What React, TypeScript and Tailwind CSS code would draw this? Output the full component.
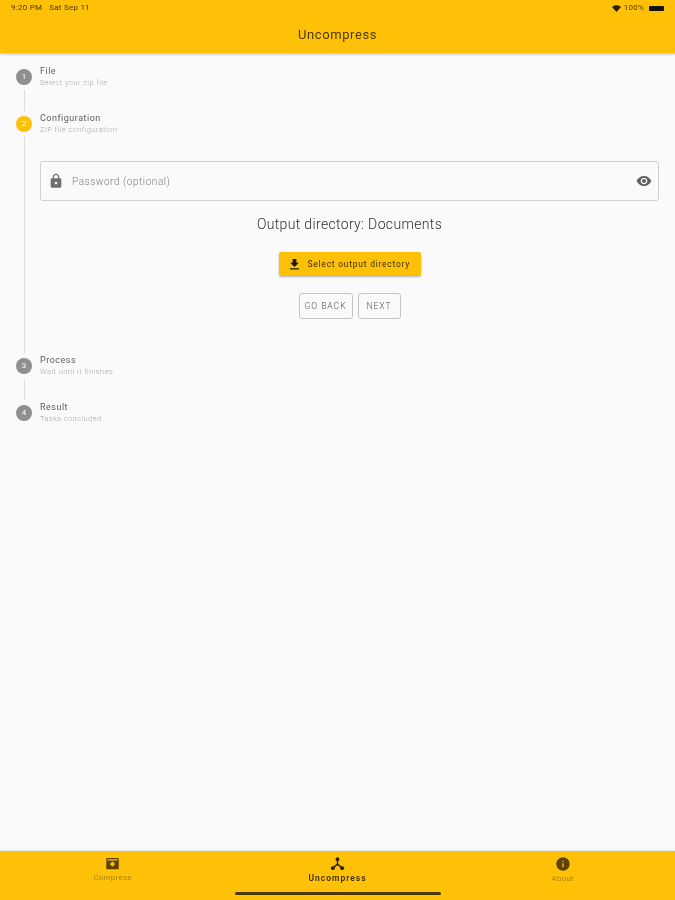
import { useState } from "react";

const steps = [
  { n: 1, title: "File", sub: "Select your zip file" },
  { n: 2, title: "Configuration", sub: "ZIP file configuration" },
  { n: 3, title: "Process", sub: "Wait until it finishes" },
  { n: 4, title: "Result", sub: "Tasks concluded" },
];

const StepHeader = ({ n, title, sub, active }: { n: number; title: string; sub: string; active?: boolean }) => (
  <div className="flex h-4 items-center gap-2">
    <div
      className={[
        "flex h-4 w-4 shrink-0 items-center justify-center rounded-full text-[8px] text-white",
        active ? "bg-[#ffc107]" : "bg-[#8f8f8f]",
      ].join(" ")}
    >
      {n}
    </div>
    <div className="flex flex-col">
      <span className="text-[9px] leading-[11px] tracking-[0.5px] text-[#5c5c5c]">{title}</span>
      <span className="mt-px text-[7.5px] font-light leading-[10px] tracking-[0.42px] text-[#a8a8a8]">{sub}</span>
    </div>
  </div>
);

const Rail = () => (
  <div className="flex w-4 shrink-0 justify-center py-[5px]">
    <div className="w-px bg-[#dcdcdc]" />
  </div>
);

const LockIcon = () => (
  <svg width="16" height="16" viewBox="0 0 24 24" fill="#6f6f6f">
    <path d="M18 8h-1V6c0-2.76-2.24-5-5-5S7 3.24 7 6v2H6c-1.1 0-2 .9-2 2v10c0 1.1.9 2 2 2h12c1.1 0 2-.9 2-2V10c0-1.1-.9-2-2-2zm-6 9c-1.1 0-2-.9-2-2s.9-2 2-2 2 .9 2 2-.9 2-2 2zm3.1-9H8.9V6c0-1.71 1.39-3.1 3.1-3.1 1.71 0 3.1 1.39 3.1 3.1v2z" />
  </svg>
);

const EyeIcon = () => (
  <svg width="16" height="16" viewBox="0 0 24 24" fill="#5f5f5f">
    <path d="M12 4.5C7 4.5 2.73 7.61 1 12c1.730 4.39 6 7.5 11 7.5s9.27-3.11 11-7.5c-1.73-4.39-6-7.5-11-7.5zM12 17c-2.76 0-5-2.24-5-5s2.24-5 5-5 5 2.24 5 5-2.24 5-5 5zm0-8c-1.66 0-3 1.34-3 3s1.34 3 3 3 3-1.34 3-3-1.34-3-3-3z" />
  </svg>
);

const DownloadIcon = () => (
  <svg width="15" height="15" viewBox="0 0 24 24" fill="#1f1a00">
    <path d="M19 9h-4V3H9v6H5l7 7 7-7zM5 18v2h14v-2H5z" />
  </svg>
);

const ArchiveIcon = () => (
  <svg width="15" height="15" viewBox="0 0 24 24" fill="#5c4300">
    <path d="M20 3H4c-1.1 0-2 .9-2 2v14c0 1.1.9 2 2 2h16c1.1 0 2-.9 2-2V5c0-1.1-.9-2-2-2zm-8 14-5-5h3V9h4v3h3l-5 5zM4 7V5h16v2H4z" />
  </svg>
);

const SplitIcon = () => (
  <svg width="15" height="15" viewBox="0 0 24 24" fill="none" stroke="#2b2000" strokeWidth="2.2">
    <path d="M12 7v6l-7 6M12 13l7 6" />
    <circle cx="12" cy="5" r="3" fill="#2b2000" stroke="none" />
    <circle cx="4.5" cy="19.5" r="3" fill="#2b2000" stroke="none" />
    <circle cx="19.5" cy="19.5" r="3" fill="#2b2000" stroke="none" />
  </svg>
);

const InfoIcon = () => (
  <svg width="16" height="16" viewBox="0 0 24 24" fill="#5c4300">
    <path d="M12 2C6.48 2 2 6.48 2 12s4.48 10 10 10 10-4.48 10-10S17.52 2 12 2zm1 15h-2v-6h2v6zm0-8h-2V7h2v2z" />
  </svg>
);

const App = () => {
  const [tab] = useState("Uncompress");
  const tabs = [
    { label: "Compress", icon: <ArchiveIcon /> },
    { label: "Uncompress", icon: <SplitIcon /> },
    { label: "About", icon: <InfoIcon /> },
  ];

  return (
    <div className="flex h-[900px] w-full flex-col overflow-hidden bg-[#fafafa] font-['Roboto',sans-serif] blur-[0.4px]">
      {/* Header */}
      <header className="z-10 flex h-[53px] shrink-0 flex-col bg-[#ffc107] px-[11px] shadow-[0_1px_3px_rgba(0,0,0,0.25)]">
        <div className="flex h-4 items-center justify-between text-[8px] tracking-[0.25px] text-[#4a3800]">
          <div className="flex gap-[7px]">
            <span>9:20 PM</span>
            <span>Sat Sep 11</span>
          </div>
          <div className="flex items-center gap-[3px]">
            <svg width="9" height="7" viewBox="0 0 24 18" fill="#2b2000">
              <path d="M12 18 0 5c7-6.500 17-6.500 24 0z" />
            </svg>
            <span>100%</span>
            <div className="ml-[2px] h-[5px] w-[15px] rounded-[1px] bg-[#111111]" />
          </div>
        </div>
        <div className="flex flex-1 items-center justify-center pb-[5px] pt-[5px] text-[13px] tracking-[0.6px] text-[#4a3800]">
          Uncompress
        </div>
      </header>

      {/* Stepper */}
      <main className="flex-1 px-4 pt-4">
        <StepHeader {...steps[0]} />
        <div className="flex h-[31px] gap-2">
          <Rail />
        </div>
        <StepHeader {...steps[1]} active />
        <div className="flex h-[226px] gap-2">
          <Rail />
          <div className="flex flex-1 flex-col items-center pt-[29px]">
            <div className="flex h-[40px] w-full items-center rounded-[3px] border border-[#cfcfcf] pl-[7px] pr-[6px]">
              <LockIcon />
              <span className="ml-2 flex-1 text-[10px] font-light tracking-[0.56px] text-[#7d7d7d]">Password (optional)</span>
              <EyeIcon />
            </div>
            <p className="mt-[15px] text-[14px] font-light leading-[17px] tracking-[0.34px] text-[#2f2f2f]">
              Output directory: Documents
            </p>
            <button className="mt-[19px] flex h-6 w-[142px] items-center rounded-[2px] bg-[#ffc107] pl-[8px] text-[8.500px] tracking-[0.75px] text-[#3d2f00] shadow-[0_1px_2px_rgba(0,0,0,0.3)]">
              <DownloadIcon />
              <span className="ml-[6px]">Select output directory</span>
            </button>
            <div className="mt-[17px] flex gap-[5px]">
              <button className="h-[26px] w-[54px] rounded-[3px] border border-[#c4c4c4] text-[8.500px] font-light tracking-[1px] text-[#555555]">
                GO BACK
              </button>
              <button className="h-[26px] w-[43px] rounded-[3px] border border-[#c4c4c4] text-[8.500px] font-light tracking-[1px] text-[#555555]">
                NEXT
              </button>
            </div>
          </div>
        </div>
        <StepHeader {...steps[2]} />
        <div className="flex h-[31px] gap-2">
          <Rail />
        </div>
        <StepHeader {...steps[3]} />
      </main>

      {/* Bottom tabs */}
      <nav className="relative flex h-[49px] shrink-0 bg-[#ffc107] shadow-[0_-1px_2px_rgba(0,0,0,0.08)]">
        {tabs.map(({ label, icon }) => (
          <div key={label} className="flex flex-1 flex-col items-center pt-[5px]">
            {icon}
            <span
              className={[
                "mt-[2px] leading-[10px]",
                label === tab
                  ? "text-[8.500px] font-semibold tracking-[1px] text-[#3d2f00]"
                  : "text-[8px] tracking-[0.22px] text-[#a8860f]",
              ].join(" ")}
            >
              {label}
            </span>
          </div>
        ))}
        <div className="absolute bottom-[5px] left-[235px] h-[3px] w-[206px] rounded-full bg-[#4a3800]" />
      </nav>
    </div>
  );
};

export default App;
